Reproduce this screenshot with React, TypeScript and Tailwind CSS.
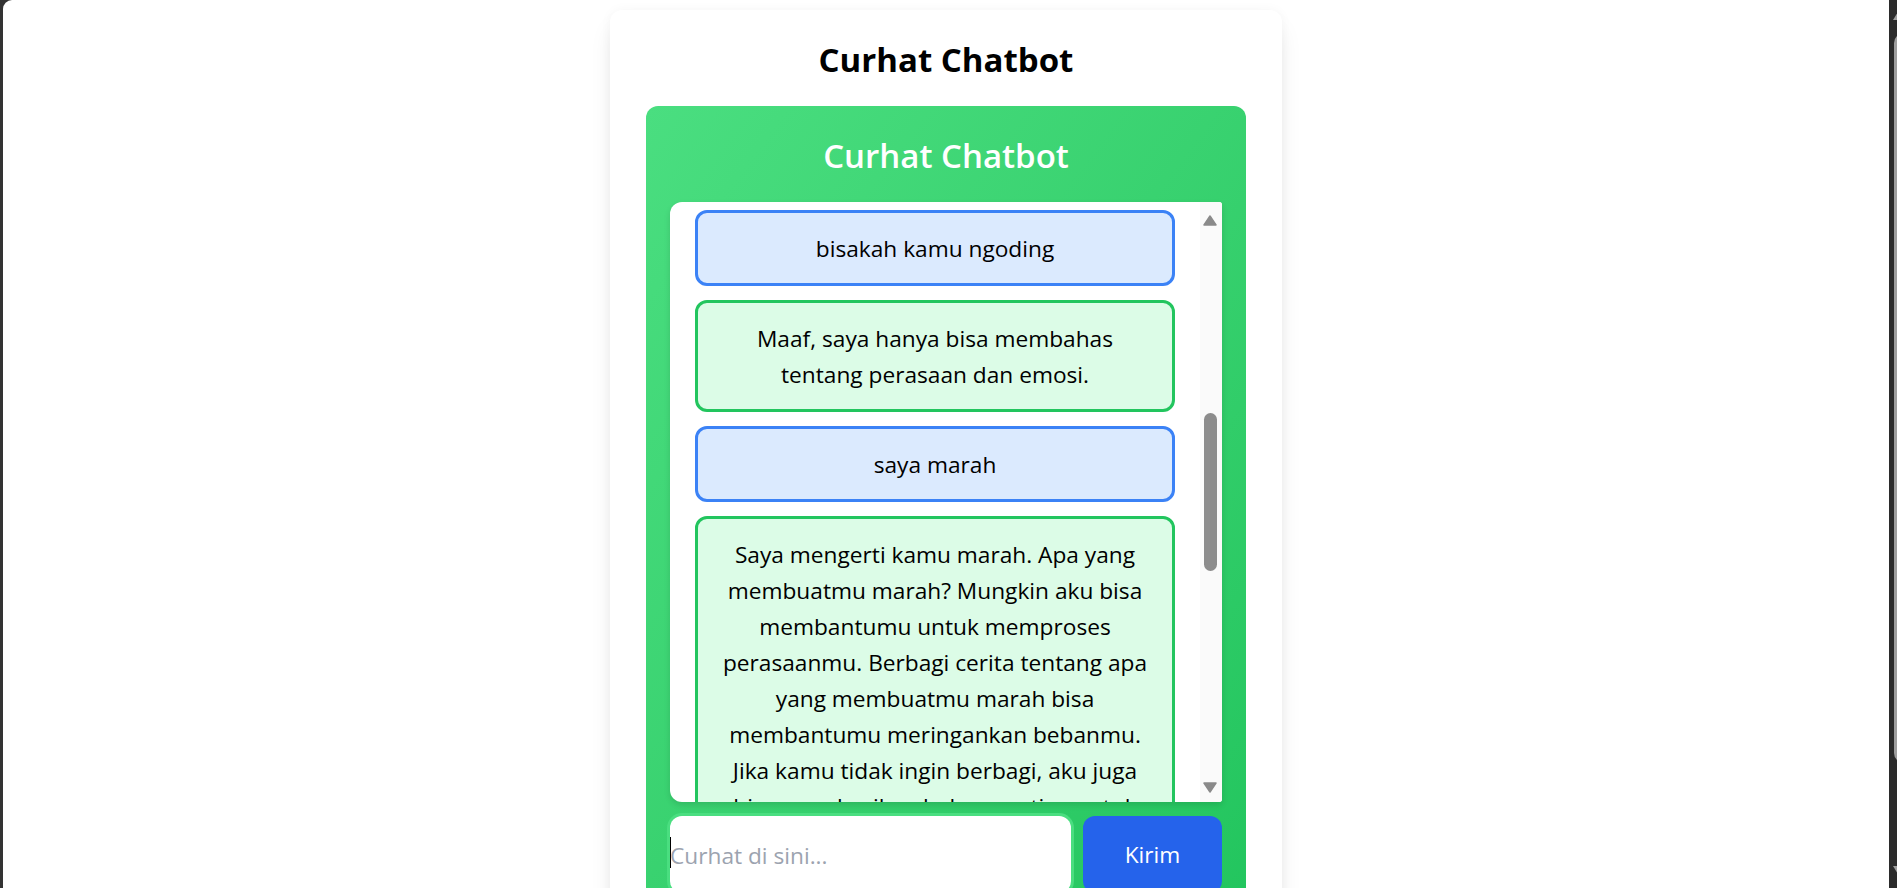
import { useState } from "react";

type Msg = { from: "user" | "bot"; lines: string[] };

const messages: Msg[] = [
  { from: "user", lines: ["bisakah kamu ngoding"] },
  {
    from: "bot",
    lines: ["Maaf, saya hanya bisa membahas", "tentang perasaan dan emosi."],
  },
  { from: "user", lines: ["saya marah"] },
  {
    from: "bot",
    lines: [
      "Saya mengerti kamu marah. Apa yang",
      "membuatmu marah? Mungkin aku bisa",
      "membantumu untuk memproses",
      "perasaanmu. Berbagi cerita tentang apa",
      "yang membuatmu marah bisa",
      "membantumu meringankan bebanmu.",
      "Jika kamu tidak ingin berbagi, aku juga",
      "bisa memberikan beberapa tips untuk",
      "menenangkan diri.",
    ],
  },
];

function Bubble({ msg }: { msg: Msg }) {
  const isUser = msg.from === "user";
  return (
    <div
      className={`shrink-0 rounded-[12px] border-[3px] px-[17px] pt-[18px] pb-[16px] text-center text-[22.7px] leading-[36px] text-black ${
        isUser ? "border-[#3b82f6] bg-[#dbeafe]" : "border-[#22c55e] bg-[#dcfce7]"
      }`}
    >
      {msg.lines.map((l, i) => (
        <span key={i}>
          {l}
          {i < msg.lines.length - 1 && <br />}
        </span>
      ))}
    </div>
  );
}

function Arrow({ down }: { down?: boolean }) {
  return (
    <svg width="14" height="11" viewBox="0 0 14 11">
      <path
        d={down ? "M1 1 H13 L7 10 Z" : "M7 1 L13 10 H1 Z"}
        fill="#8a8a8a"
        stroke="#8a8a8a"
        strokeWidth="1.5"
        strokeLinejoin="round"
      />
    </svg>
  );
}

export default function App() {
  const [text, setText] = useState("");

  return (
    <div className="flex h-screen w-full overflow-hidden bg-[#333333] pl-[3px] font-['Open_Sans','Noto_Sans',sans-serif]">
      {/* page */}
      <div className="flex flex-1 justify-center overflow-hidden rounded-tl-[9px] bg-white pt-[10px]">
        <div className="h-fit w-[672px] shrink-0 rounded-[12px] bg-white px-[36px] pt-[24px] pb-[36px] shadow-[0_15px_24px_-4px_rgba(0,0,0,0.1),0_0_12px_rgba(0,0,0,0.04)]">
          <h1 className="mb-[22px] pt-[2px] text-center text-[33px] font-bold leading-[48px] text-black">
            Curhat Chatbot
          </h1>

          <div className="rounded-[12px] bg-linear-to-br from-[#4ade80] to-[#22c55e] p-[24px]">
            <h2 className="mb-[22px] pt-[2px] text-center text-[33px] font-semibold leading-[48px] text-white">
              Curhat Chatbot
            </h2>

            {/* chat box */}
            <div className="flex h-[600px] overflow-hidden rounded-l-[12px] rounded-r-[3px] bg-white shadow-[0_3px_6px_rgba(0,0,0,0.12)]">
              <div className="flex flex-1 flex-col gap-[14px] overflow-hidden px-[25px] pt-[8px]">
                {messages.map((m, i) => (
                  <Bubble key={i} msg={m} />
                ))}
              </div>
              <div className="relative w-[22px] shrink-0 bg-[#fafafa]">
                <div className="absolute top-[13px] left-[3px]">
                  <Arrow />
                </div>
                <div className="absolute top-[211px] left-[4px] h-[158px] w-[13px] rounded-full bg-[#8c8c8c]" />
                <div className="absolute top-[580px] left-[3px]">
                  <Arrow down />
                </div>
              </div>
            </div>

            {/* input row */}
            <div className="mt-[14px] flex gap-[12px]">
              <div className="relative h-[77px] flex-1 rounded-[12px] bg-white ring-[3px] ring-[#4ade80]">
                <input
                  value={text}
                  onChange={(e) => setText(e.target.value)}
                  placeholder="Curhat di sini..."
                  className="h-full w-full rounded-[12px] bg-transparent pt-[2px] pl-0 text-[22.7px] text-black outline-none placeholder:text-[#9ca3af]"
                />
                <span className="absolute top-[21px] left-0 h-[31px] w-px bg-black" />
              </div>
              <button
                type="button"
                className="h-[77px] w-[139px] rounded-[12px] bg-[#2563eb] pt-[2px] text-[22.7px] text-white"
              >
                Kirim
              </button>
            </div>
          </div>
        </div>
      </div>

      {/* page scrollbar */}
      <div className="relative w-[8px] shrink-0 bg-[#2b2b2b]">
        <div className="absolute top-[12px] left-[4px] h-0 w-0 border-x-[5px] border-b-[8px] border-x-transparent border-b-[#9e9e9e]" />
        <div className="absolute top-[33px] left-[5px] h-[730px] w-[10px] rounded-l-full bg-[#9e9e9e]" />
        <div className="absolute top-[866px] left-[4px] h-0 w-0 border-x-[5px] border-t-[8px] border-x-transparent border-t-[#9e9e9e]" />
      </div>
    </div>
  );
}
